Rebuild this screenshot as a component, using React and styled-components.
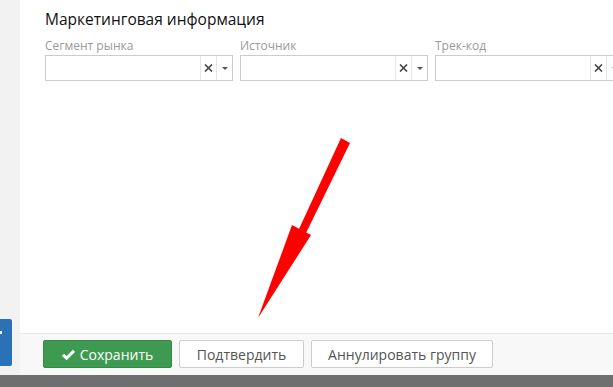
import React from "react";
import styled, { createGlobalStyle } from "styled-components";

const Global = createGlobalStyle`
  html, body {
    margin: 0;
    padding: 0;
    background: #ffffff;
    font-family: "Open Sans", "Liberation Sans", sans-serif;
  }
`;

const Page = styled.div`
  width: 613px;
  height: 387px;
  display: flex;
  flex-direction: column;
  overflow: hidden;
  position: relative;
`;

const Body = styled.div`
  flex: 1;
  display: flex;
  min-height: 0;
`;

const Sidebar = styled.div`
  width: 20px;
  flex: none;
  background: #f2f2f2;
  display: flex;
  flex-direction: column;
  justify-content: flex-end;
  padding-bottom: 9px;
  box-sizing: border-box;
`;

const SideTab = styled.div`
  width: 12px;
  height: 47px;
  background: #2a71b8;
  border-radius: 0 2px 2px 0;
  position: relative;

  &::before {
    content: "";
    position: absolute;
    left: 0;
    top: 12px;
    width: 2px;
    height: 3px;
    background: #ffffff;
  }
`;

const Main = styled.div`
  flex: 1;
  display: flex;
  flex-direction: column;
  min-width: 0;
  overflow: hidden;
`;

const Content = styled.div`
  flex: 1;
  padding: 9px 0 0 25px;
`;

const Title = styled.div`
  font-size: 15.5px;
  line-height: 20px;
  font-weight: 400;
  color: #111111;
  margin-bottom: 9px;
`;

const FieldRow = styled.div`
  display: grid;
  grid-template-columns: repeat(3, 188px);
  column-gap: 7px;
`;

const Field = styled.div`
  display: flex;
  flex-direction: column;
`;

const Label = styled.div`
  font-size: 12px;
  line-height: 16px;
  color: #9a9a9a;
  margin-bottom: 1px;
`;

const Select = styled.div`
  height: 26px;
  box-sizing: border-box;
  border: 1px solid #cccccc;
  display: flex;
  background: #ffffff;
`;

const SelectValue = styled.div`
  flex: 1;
`;

const SelectButton = styled.div`
  width: 15px;
  flex: none;
  border-left: 1px solid #e6e6e6;
  display: flex;
  align-items: center;
  justify-content: center;
`;

const Caret = styled.span`
  width: 0;
  height: 0;
  border-left: 3px solid transparent;
  border-right: 3px solid transparent;
  border-top: 3px solid #555555;
`;

const Footer = styled.div`
  height: 42px;
  flex: none;
  box-sizing: border-box;
  border-top: 1px solid #e8e8e8;
  background: #f8f8f8;
  display: flex;
  align-items: flex-start;
  padding: 6px 0 0 23px;
  gap: 7px;
`;

const Button = styled.button`
  height: 28px;
  box-sizing: border-box;
  width: ${(p) => p.$width}px;
  border-radius: 2px;
  font-family: "Open Sans", "Liberation Sans", sans-serif;
  font-size: 14px;
  display: flex;
  align-items: center;
  justify-content: center;
  gap: 5px;
  cursor: pointer;
  border: 1px solid ${(p) => (p.$primary ? "#358a46" : "#cccccc")};
  background: ${(p) => (p.$primary ? "#3d9a50" : "#ffffff")};
  color: ${(p) => (p.$primary ? "#ffffff" : "#555555")};
  padding: 0;
`;

const BottomBar = styled.div`
  height: 12px;
  flex: none;
  background: #6f6f6f;
`;

const ArrowOverlay = styled.svg`
  position: absolute;
  left: 0;
  top: 0;
  pointer-events: none;
`;

const Check = () => (
  <svg width="13" height="11" viewBox="0 0 13 11">
    <path d="M1 5.8 L4.6 9.2 L12 1.8" fill="none" stroke="#ffffff" strokeWidth="3" />
  </svg>
);

const Cross = () => (
  <svg width="9" height="8" viewBox="0 0 9 8">
    <path d="M1 0.5 L8 7.5 M8 0.5 L1 7.5" stroke="#444444" strokeWidth="1.6" />
  </svg>
);

const fields = ["Сегмент рынка", "Источник", "Трек-код"];

export default function App() {
  return (
    <Page>
      <Global />
      <Body>
        <Sidebar>
          <SideTab />
        </Sidebar>
        <Main>
          <Content>
            <Title>Маркетинговая информация</Title>
            <FieldRow>
              {fields.map((f) => (
                <Field key={f}>
                  <Label>{f}</Label>
                  <Select>
                    <SelectValue />
                    <SelectButton>
                      <Cross />
                    </SelectButton>
                    <SelectButton>
                      <Caret />
                    </SelectButton>
                  </Select>
                </Field>
              ))}
            </FieldRow>
          </Content>
          <Footer>
            <Button $primary $width={129}>
              <Check />
              Сохранить
            </Button>
            <Button $width={125}>Подтвердить</Button>
            <Button $width={182}>Аннулировать группу</Button>
          </Footer>
        </Main>
      </Body>
      <BottomBar />
      <ArrowOverlay width="613" height="387" viewBox="0 0 613 387">
        <polygon points="341,138 350,143 306,233 299,229" fill="#ff0000" />
        <polygon points="292,225 311,235 258,318" fill="#ff0000" />
      </ArrowOverlay>
    </Page>
  );
}
